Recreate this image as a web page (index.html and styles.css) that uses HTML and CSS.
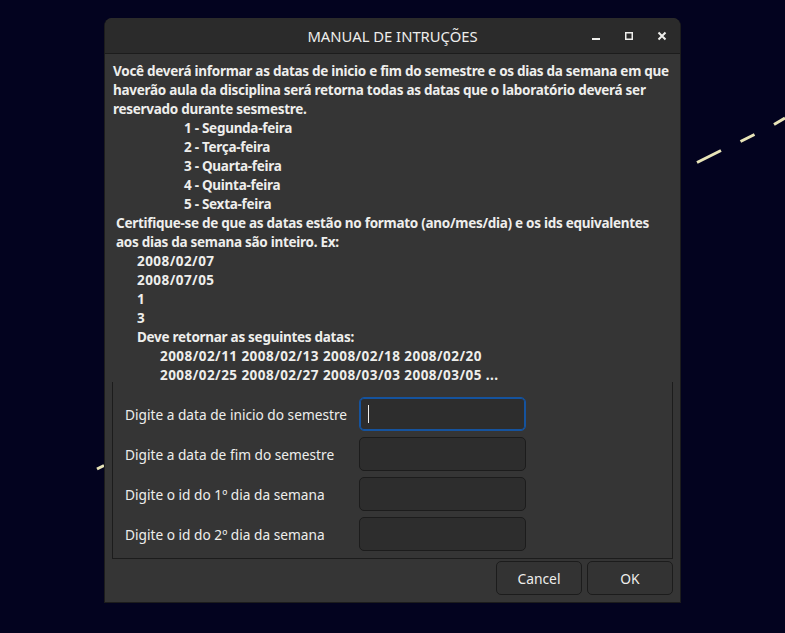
FILE: index.html
```html
<!DOCTYPE html>
<html lang="pt">
<head>
<meta charset="utf-8">
<title>MANUAL DE INTRUÇÕES</title>
<link rel="stylesheet" href="styles.css">
</head>
<body>
<svg class="bg-lines" width="785" height="633" viewBox="0 0 785 633">
  <g stroke="#e8e4b8" stroke-width="3" stroke-linecap="butt">
    <line x1="697" y1="162.5" x2="721" y2="150.5"/>
    <line x1="740.5" y1="141.5" x2="754.5" y2="134.5"/>
    <line x1="774" y1="124.5" x2="785" y2="118"/>
    <line x1="97" y1="469" x2="104" y2="465.5"/>
  </g>
</svg>
<div class="window">
  <div class="titlebar">
    <span class="title">MANUAL DE INTRUÇÕES</span>
    <div class="controls">
      <svg class="ctl" width="16" height="16" viewBox="0 0 16 16"><rect x="4" y="10" width="8" height="2" fill="#eeeeec"/></svg>
      <svg class="ctl" width="16" height="16" viewBox="0 0 16 16"><rect x="4.75" y="4.75" width="6.5" height="6.5" fill="none" stroke="#eeeeec" stroke-width="1.5"/></svg>
      <svg class="ctl" width="16" height="16" viewBox="0 0 16 16"><path d="M4.5 4.5 L11.5 11.5 M11.5 4.5 L4.5 11.5" stroke="#eeeeec" stroke-width="2"/></svg>
    </div>
  </div>
  <div class="content">
    <div class="manual">
      <p>Você deverá informar as datas de inicio e fim do semestre e os dias da semana em que haverão aula da disciplina será retorna todas as datas que o laboratório deverá ser reservado durante sesmestre.</p>
      <p class="ind-list">1 - Segunda-feira</p>
      <p class="ind-list">2 - Terça-feira</p>
      <p class="ind-list">3 - Quarta-feira</p>
      <p class="ind-list">4 - Quinta-feira</p>
      <p class="ind-list">5 - Sexta-feira</p>
      <p class="ind-cert">Certifique-se de que as datas estão no formato (ano/mes/dia) e os ids equivalentes aos dias da semana são inteiro. Ex:</p>
      <p class="ind-ex num">2008/02/07</p>
      <p class="ind-ex num">2008/07/05</p>
      <p class="ind-ex num">1</p>
      <p class="ind-ex num">3</p>
      <p class="ind-ex">Deve retornar as seguintes datas:</p>
      <p class="ind-res num">2008/02/11 2008/02/13 2008/02/18 2008/02/20</p>
      <p class="ind-res num">2008/02/25 2008/02/27 2008/03/03 2008/03/05 ...</p>
    </div>
    <div class="frame">
      <div class="row">
        <label class="lbl">Digite a data de inicio do semestre</label>
        <div class="entry focus"><span class="caret"></span></div>
      </div>
      <div class="row">
        <label class="lbl">Digite a data de fim do semestre</label>
        <div class="entry"></div>
      </div>
      <div class="row">
        <label class="lbl">Digite o id do 1º dia da semana</label>
        <div class="entry"></div>
      </div>
      <div class="row">
        <label class="lbl">Digite o id do 2º dia da semana</label>
        <div class="entry"></div>
      </div>
    </div>
    <div class="buttons">
      <button class="btn">Cancel</button>
      <button class="btn">OK</button>
    </div>
  </div>
</div>
</body>
</html>
```

FILE: styles.css
```css
* { box-sizing: border-box; }
html, body {
  margin: 0;
  padding: 0;
  width: 785px;
  height: 633px;
  overflow: hidden;
  background: #03031f;
  font-family: "Noto Sans", "Open Sans", sans-serif;
  color: #eeeeec;
}
.bg-lines {
  position: absolute;
  left: 0;
  top: 0;
}
.window {
  position: absolute;
  left: 104px;
  top: 18px;
  width: 577px;
  height: 585px;
  background: #353535;
  border-radius: 8px 8px 0 0;
  border: 1px solid #1c1c1c;
  border-top: none;
  display: flex;
  flex-direction: column;
}
.titlebar {
  height: 36px;
  background: #2b2b2b;
  border-bottom: 1px solid #1c1c1c;
  border-radius: 8px 8px 0 0;
  position: relative;
  display: flex;
  align-items: center;
  justify-content: center;
}
.title {
  font-size: 14.8px;
  font-weight: 400;
}
.controls {
  position: absolute;
  right: 10px;
  top: 10px;
  display: flex;
  gap: 17px;
}
.ctl { display: block; }
.content {
  flex: 1;
  display: flex;
  flex-direction: column;
  padding: 8px 7px 0 7px;
}
.manual {
  height: 320px;
  overflow: hidden;
  font-weight: 700;
  font-size: 13.5px;
  letter-spacing: -0.28px;
  line-height: 19px;
  padding-left: 1px;
}
.manual p { margin: 0; }
.manual .num { letter-spacing: 0.45px; }
.ind-list { padding-left: 71px; }
.ind-cert { padding-left: 3px; }
.ind-ex { padding-left: 24px; }
.ind-res { padding-left: 47px; }
.frame {
  border: 1px solid #1c1c1c;
  border-top: none;
  height: 177px;
  padding: 15px 12px 5px 12px;
  display: flex;
  flex-direction: column;
  gap: 6px;
}
.row {
  display: flex;
  align-items: center;
  height: 34px;
}
.lbl {
  width: 234px;
  font-size: 13.7px;
}
.entry {
  width: 167px;
  height: 34px;
  background: #2d2d2d;
  border: 1px solid #1c1c1c;
  border-radius: 5px;
  display: flex;
  align-items: center;
  padding-left: 8px;
}
.entry.focus {
  border-color: #15539e;
  box-shadow: inset 0 0 0 1px #15539e;
}
.caret {
  width: 1px;
  height: 18px;
  background: #eeeeec;
}
.buttons {
  display: flex;
  justify-content: flex-end;
  gap: 5px;
  margin-top: 2px;
}
.btn {
  width: 86px;
  height: 34px;
  background: #333333;
  border: 1px solid #1c1c1c;
  border-radius: 5px;
  color: #eeeeec;
  font-family: "Noto Sans", "Open Sans", sans-serif;
  font-size: 13.8px;
  padding: 0;
}
```
